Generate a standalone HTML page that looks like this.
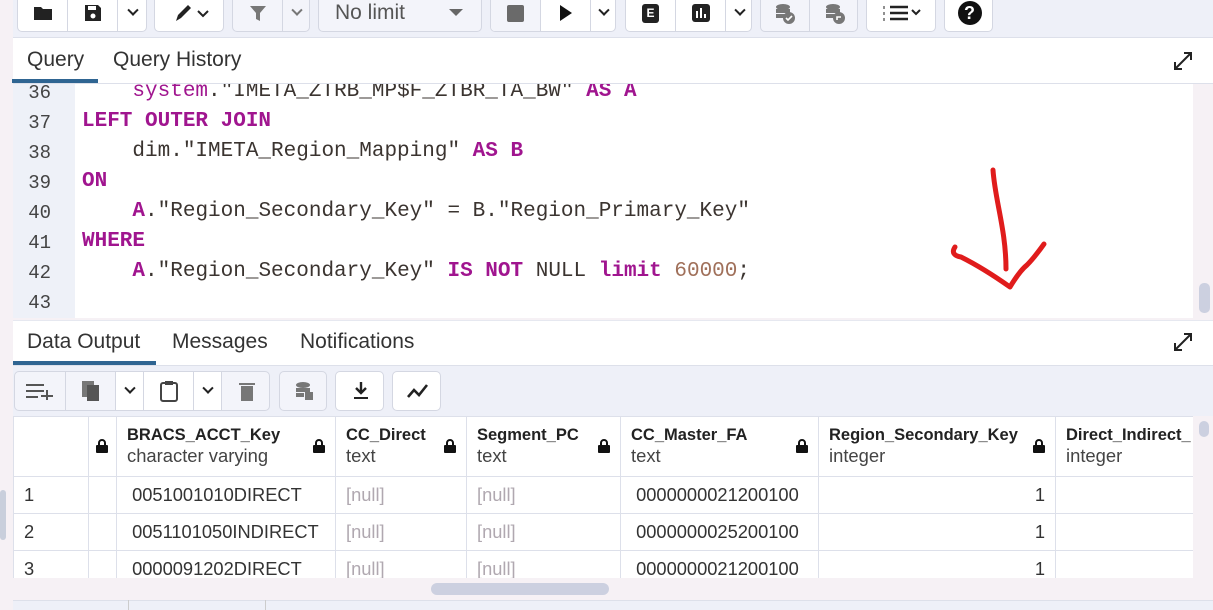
<!DOCTYPE html>
<html><head><meta charset="utf-8"><style>
*{box-sizing:border-box;margin:0;padding:0}
body{width:1213px;height:610px;overflow:hidden;background:#f6f1f5;font-family:"Liberation Sans",sans-serif;position:relative;color:#222}
.a{position:absolute}
.btn{position:absolute;background:#fff;border:1px solid #d4d7e2;border-radius:5px;display:flex;overflow:hidden}
.btn>div{border-right:1px solid #d4d7e2;display:flex;align-items:center;justify-content:center;height:100%;flex:none}
.btn>div:last-child{border-right:none}
.chev{width:10px;height:10px;border-right:2px solid #222;border-bottom:2px solid #222;transform:rotate(45deg) translate(-2px,-2px)}
.code{font-family:"Liberation Mono",monospace;font-size:21px;color:#3b3430;white-space:pre;line-height:30px}
.k{color:#a0158f;font-weight:bold}
.s{color:#a0158f}
.n{color:#a0705a}
.ln{font-family:"Liberation Mono",monospace;font-size:19px;color:#444;line-height:30px;text-align:right}
.tab{position:absolute;font-size:21px;color:#333}
table{border-collapse:collapse;position:absolute;left:13px;top:416px;background:#fff;font-size:18.3px}
td{border:1px solid #dde0ea;height:37px;padding:0 10px;color:#333;white-space:nowrap;overflow:hidden}
th{border:1px solid #dde0ea;height:60px;text-align:left;font-weight:normal;padding:0 10px;vertical-align:middle;position:relative;white-space:nowrap;overflow:hidden}
th b{font-size:16.5px;color:#222;display:block;font-weight:bold}
th i{font-style:normal;font-size:18.4px;color:#444}
.lk{position:absolute;right:10px;top:22px;width:12px;height:14px}
.nul{color:#b0a8b0}
</style></head><body>
<div class="a" style="left:0;top:490px;width:6px;height:50px;background:#c9cfdc;border-radius:3px"></div>
<div class="a" style="left:13px;top:0;width:1200px;height:38px;background:#eef0f8;border-bottom:1px solid #dde0ea"></div>
<div class="btn" style="left:17px;top:-6px;width:130px;height:38px"><div style="width:50px"><svg width="20" height="16"><path d="M1 2h7l2 2h9v11H1z" fill="#222"/></svg></div><div style="width:50px"><svg width="18" height="18"><path d="M1 1h13l3 3v13H1z" fill="#222"/><rect x="4" y="2" width="8" height="4" fill="#fff"/><circle cx="9" cy="12" r="2.5" fill="#fff"/></svg></div><div style="width:30px"><div class="chev" style="width:8px;height:8px"></div></div></div>
<div class="btn" style="left:154px;top:-6px;width:70px;height:38px"><div style="width:70px"><svg width="44" height="20"><path d="M8 18l2-6 10-10 3 3-10 10z" fill="#222"/><path d="M30 8l5 5 5-5" stroke="#222" stroke-width="2" fill="none"/></svg></div></div>
<div class="btn" style="left:232px;top:-6px;width:78px;height:38px;background:#f3f4fa"><div style="width:50px"><svg width="18" height="18"><path d="M1 2h16l-6 7v8l-4-2V9z" fill="#777"/></svg></div><div style="width:28px"><div class="chev" style="width:8px;height:8px;border-color:#777"></div></div></div>
<div class="btn" style="left:318px;top:-6px;width:164px;height:38px;background:#f3f4fa"><div style="width:164px;justify-content:flex-start;padding-left:16px;color:#555;font-size:21px">No limit<svg width="14" height="8" style="margin-left:44px"><path d="M0 0h14L7 7z" fill="#666"/></svg></div></div>
<div class="btn" style="left:490px;top:-6px;width:126px;height:38px"><div style="width:50px;background:#f3f4fa"><div style="width:17px;height:17px;background:#6a6a6a;border-radius:2px"></div></div><div style="width:50px"><svg width="14" height="18"><path d="M1 1l12 8-12 8z" fill="#111"/></svg></div><div style="width:26px"><div class="chev" style="width:8px;height:8px"></div></div></div>
<div class="btn" style="left:625px;top:-6px;width:127px;height:38px"><div style="width:50px"><div style="width:17px;height:19px;background:#222;border-radius:3px;color:#fff;font-size:12px;font-weight:bold;text-align:center;line-height:19px">E</div></div><div style="width:50px"><svg width="18" height="18"><rect width="18" height="18" rx="3" fill="#222"/><path d="M5 7v7M9 4v10M13 10v4" stroke="#fff" stroke-width="2"/></svg></div><div style="width:27px"><div class="chev" style="width:8px;height:8px"></div></div></div>
<div class="btn" style="left:760px;top:-6px;width:98px;height:38px;background:#f3f4fa"><div style="width:49px"><svg width="22" height="22"><ellipse cx="9" cy="5" rx="7" ry="3" fill="#777"/><rect x="2" y="7" width="14" height="4" fill="#777"/><rect x="2" y="12" width="9" height="4" fill="#777"/><circle cx="15" cy="16" r="6" fill="#777"/><path d="M12 16l2 2 4-4" stroke="#fff" stroke-width="1.6" fill="none"/></svg></div><div style="width:49px"><svg width="22" height="22"><ellipse cx="9" cy="5" rx="7" ry="3" fill="#777"/><rect x="2" y="7" width="14" height="4" fill="#777"/><rect x="2" y="12" width="9" height="4" fill="#777"/><circle cx="15" cy="16" r="6" fill="#777"/><path d="M13 18v-3h4" stroke="#fff" stroke-width="1.6" fill="none"/></svg></div></div>
<div class="btn" style="left:866px;top:-6px;width:70px;height:38px"><div style="width:70px"><svg width="40" height="18"><path d="M8 3h18M8 9h18M8 15h18" stroke="#222" stroke-width="2.4"/><path d="M2 2v3M2 8v3M2 14v3" stroke="#222"/><path d="M30 6l4 4 4-4" stroke="#222" stroke-width="2" fill="none"/></svg></div></div>
<div class="btn" style="left:944px;top:-6px;width:49px;height:38px"><div style="width:49px"><div style="width:24px;height:24px;border-radius:50%;background:#111;color:#fff;font-weight:bold;font-size:18px;text-align:center;line-height:24px">?</div></div></div>
<div class="a" style="left:13px;top:38px;width:1200px;height:46px;background:#fff;border-bottom:1px solid #dde0ea"></div>
<div class="tab" style="left:27px;top:48px">Query</div>
<div class="tab" style="left:113px;top:48px">Query History</div>
<div class="a" style="left:12px;top:79px;width:86px;height:4px;background:#2f6592"></div>
<svg class="a" style="left:1172px;top:50px" width="22" height="22"><path d="M3 19L19 3M12 3h7v7M3 12v7h7" stroke="#222" stroke-width="2" fill="none"/></svg>
<div class="a" style="left:13px;top:84px;width:1180px;height:234px;background:#fff;overflow:hidden">
<div class="a" style="left:0;top:0;width:62px;height:234px;background:#eef1f8"></div>
<div class="a ln" style="left:0;top:-6px;width:38px">36<br>37<br>38<br>39<br>40<br>41<br>42<br>43</div>
<div class="a code" style="left:69px;top:-7px">    <span class="s">system</span>."IMETA_ZTRB_MP$F_ZTBR_TA_BW" <span class="k">AS</span> <span class="k">A</span>
<span class="k">LEFT OUTER JOIN</span>
    dim."IMETA_Region_Mapping" <span class="k">AS</span> <span class="k">B</span>
<span class="k">ON</span>
    <span class="k">A</span>."Region_Secondary_Key" = B."Region_Primary_Key"
<span class="k">WHERE</span>
    <span class="k">A</span>."Region_Secondary_Key" <span class="k">IS NOT</span> NULL <span class="k">limit</span> <span class="n">60000</span>;
</div>
</div>
<div class="a" style="left:1193px;top:84px;width:20px;height:234px;background:#f6f1f5"></div>
<div class="a" style="left:1199px;top:283px;width:11px;height:30px;background:#ccd0e0;border-radius:5px"></div>
<svg class="a" style="left:945px;top:160px" width="110" height="140"><path d="M48 10c2 30 13 60 13 99M10 87c-4 6 0 9 6 10c16 8 32 18 49 30M65 127c6-10 12-18 17-22c6-6 12-14 17-21" stroke="#e01c1c" stroke-width="5" fill="none" stroke-linecap="round" stroke-linejoin="round"/></svg>
<div class="a" style="left:13px;top:320px;width:1200px;height:46px;background:#fff;border-bottom:1px solid #dde0ea;border-top:1px solid #e6e8f0"></div>
<div class="tab" style="left:27px;top:330px">Data Output</div>
<div class="tab" style="left:172px;top:330px">Messages</div>
<div class="tab" style="left:300px;top:330px">Notifications</div>
<div class="a" style="left:13px;top:361px;width:143px;height:4px;background:#2f6592"></div>
<svg class="a" style="left:1172px;top:331px" width="22" height="22"><path d="M3 19L19 3M12 3h7v7M3 12v7h7" stroke="#222" stroke-width="2" fill="none"/></svg>
<div class="a" style="left:13px;top:366px;width:1200px;height:50px;background:#eef0f8"></div>
<div class="btn" style="left:14px;top:371px;width:256px;height:40px;background:#f3f4fa"><div style="width:51px"><svg width="30" height="18"><path d="M1 3h18M1 9h18M1 15h12M16 14h12M22 8v12" stroke="#555" stroke-width="2"/></svg></div><div style="width:50px"><svg width="20" height="22"><rect x="1" y="1" width="12" height="16" fill="#777"/><rect x="6" y="5" width="12" height="16" fill="#555"/></svg></div><div style="width:28px;background:#fff"><div class="chev" style="width:8px;height:8px"></div></div><div style="width:50px;background:#fff"><svg width="18" height="22"><rect x="1" y="3" width="16" height="18" rx="2" stroke="#444" stroke-width="2" fill="none"/><rect x="5" y="1" width="8" height="4" fill="#444"/></svg></div><div style="width:28px;background:#fff"><div class="chev" style="width:8px;height:8px"></div></div><div style="width:49px"><svg width="16" height="20"><rect x="2" y="5" width="12" height="15" fill="#777"/><rect x="0" y="2" width="16" height="2" fill="#777"/></svg></div></div>
<div class="btn" style="left:279px;top:371px;width:48px;height:40px;background:#f3f4fa"><div style="width:48px"><svg width="20" height="20"><ellipse cx="9" cy="4" rx="7" ry="3" fill="#777"/><rect x="2" y="7" width="14" height="4" fill="#777"/><rect x="2" y="12" width="8" height="4" fill="#777"/><rect x="11" y="11" width="8" height="8" fill="#777"/></svg></div></div>
<div class="btn" style="left:335px;top:371px;width:49px;height:40px"><div style="width:49px"><svg width="18" height="20"><path d="M9 1v11M4 7l5 5 5-5" stroke="#222" stroke-width="2.4" fill="none"/><path d="M2 17h14" stroke="#222" stroke-width="2"/></svg></div></div>
<div class="btn" style="left:392px;top:371px;width:49px;height:40px"><div style="width:49px"><svg width="22" height="16"><path d="M1 14l6-7 5 5 8-10" stroke="#222" stroke-width="2.6" fill="none"/></svg></div></div>
<div class="a" style="left:13px;top:416px;width:1180px;height:162px;overflow:hidden">
<table style="left:0;top:0;width:1230px;table-layout:fixed">
<colgroup><col style="width:75px"><col style="width:28px"><col style="width:219px"><col style="width:131px"><col style="width:154px"><col style="width:198px"><col style="width:237px"><col style="width:188px"></colgroup>
<tr><th></th><th><svg class="lk" style="right:8px" width="12" height="14"><path d="M3 6V4a3 3 0 0 1 6 0v2" stroke="#111" stroke-width="2" fill="none"/><rect y="6" width="12" height="8" rx="1" fill="#111"/></svg></th>
<th><b>BRACS_ACCT_Key</b><i>character varying</i><svg class="lk" width="12" height="14"><path d="M3 6V4a3 3 0 0 1 6 0v2" stroke="#111" stroke-width="2" fill="none"/><rect y="6" width="12" height="8" rx="1" fill="#111"/></svg></th>
<th><b>CC_Direct</b><i>text</i><svg class="lk" width="12" height="14"><path d="M3 6V4a3 3 0 0 1 6 0v2" stroke="#111" stroke-width="2" fill="none"/><rect y="6" width="12" height="8" rx="1" fill="#111"/></svg></th>
<th><b>Segment_PC</b><i>text</i><svg class="lk" width="12" height="14"><path d="M3 6V4a3 3 0 0 1 6 0v2" stroke="#111" stroke-width="2" fill="none"/><rect y="6" width="12" height="8" rx="1" fill="#111"/></svg></th>
<th><b>CC_Master_FA</b><i>text</i><svg class="lk" width="12" height="14"><path d="M3 6V4a3 3 0 0 1 6 0v2" stroke="#111" stroke-width="2" fill="none"/><rect y="6" width="12" height="8" rx="1" fill="#111"/></svg></th>
<th><b>Region_Secondary_Key</b><i>integer</i><svg class="lk" width="12" height="14"><path d="M3 6V4a3 3 0 0 1 6 0v2" stroke="#111" stroke-width="2" fill="none"/><rect y="6" width="12" height="8" rx="1" fill="#111"/></svg></th>
<th><b>Direct_Indirect_</b><i>integer</i></th></tr>
<tr><td>1</td><td></td><td>&nbsp;0051001010DIRECT</td><td class="nul">[null]</td><td class="nul">[null]</td><td>&nbsp;0000000021200100</td><td style="text-align:right">1</td><td></td></tr>
<tr><td>2</td><td></td><td>&nbsp;0051101050INDIRECT</td><td class="nul">[null]</td><td class="nul">[null]</td><td>&nbsp;0000000025200100</td><td style="text-align:right">1</td><td></td></tr>
<tr><td>3</td><td></td><td>&nbsp;0000091202DIRECT</td><td class="nul">[null]</td><td class="nul">[null]</td><td>&nbsp;0000000021200100</td><td style="text-align:right">1</td><td></td></tr>
</table></div>
<div class="a" style="left:1193px;top:416px;width:20px;height:162px;background:#f6f1f5"></div>
<div class="a" style="left:1199px;top:421px;width:10px;height:16px;background:#ccd0e0;border-radius:5px"></div>
<div class="a" style="left:13px;top:578px;width:1200px;height:22px;background:#f6f1f5"></div>
<div class="a" style="left:431px;top:583px;width:178px;height:12px;background:#ccd0e0;border-radius:6px"></div>
<div class="a" style="left:13px;top:600px;width:1200px;height:10px;background:#eef0f8;border-top:1px solid #dde0ea"></div>
<div class="a" style="left:128px;top:600px;width:1px;height:10px;background:#ccc"></div>
<div class="a" style="left:265px;top:600px;width:1px;height:10px;background:#ccc"></div>
</body></html>
